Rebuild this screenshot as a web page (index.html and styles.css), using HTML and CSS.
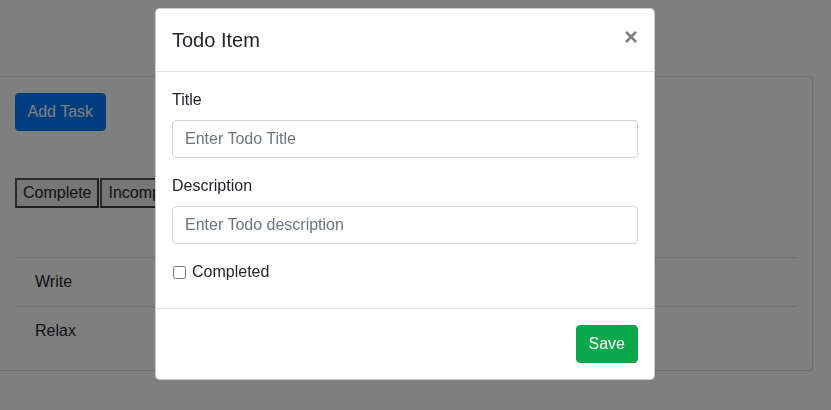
FILE: index.html
```html
<!DOCTYPE html>
<html lang="en">
<head>
<meta charset="utf-8">
<title>Todo</title>
<link rel="stylesheet" href="styles.css">
</head>
<body>
<main class="page">
  <section class="card">
    <div class="card-body">
      <button class="btn btn-primary" type="button">Add Task</button>
      <div class="filters">
        <button class="filter" type="button">Complete</button>
        <button class="filter" type="button">Incomplete</button>
      </div>
      <table class="todo-table">
        <tbody>
          <tr><td>Write</td></tr>
          <tr><td>Relax</td></tr>
        </tbody>
      </table>
    </div>
  </section>
</main>

<div class="backdrop"></div>

<div class="modal-dialog" role="dialog">
  <div class="modal-content">
    <div class="modal-header">
      <h5 class="modal-title">Todo Item</h5>
      <button class="close" type="button" aria-label="Close">×</button>
    </div>
    <div class="modal-body">
      <div class="form-group">
        <label class="field-label" for="title">Title</label>
        <input class="form-control" id="title" type="text" placeholder="Enter Todo Title">
      </div>
      <div class="form-group">
        <label class="field-label" for="desc">Description</label>
        <input class="form-control" id="desc" type="text" placeholder="Enter Todo description">
      </div>
      <div class="form-check">
        <input class="check" id="done" type="checkbox">
        <label for="done">Completed</label>
      </div>
    </div>
    <div class="modal-footer">
      <button class="btn btn-success" type="button">Save</button>
    </div>
  </div>
</div>
</body>
</html>
```

FILE: styles.css
```css
* { box-sizing: border-box; }

html, body {
  margin: 0;
  padding: 0;
  background: #fff;
  font-family: "Liberation Sans", Arial, sans-serif;
  font-size: 16px;
  line-height: 1.5;
  color: #212529;
}

.page {
  padding-top: 76px;
}

.card {
  width: 813px;
  height: 295px;
  border: 1px solid rgba(0, 0, 0, 0.125);
  border-left: none;
  border-radius: 0 4px 4px 0;
  background: #fff;
}

.card-body {
  padding: 16px 15px 15px 15px;
}

.btn {
  display: inline-block;
  font-family: inherit;
  font-size: 16px;
  line-height: 24px;
  padding: 6px 12px;
  border: 1px solid transparent;
  border-radius: 4px;
  color: #fff;
  cursor: pointer;
}

.btn-primary {
  padding: 6px 11.5px;
  background: #007bff;
  border-color: #007bff;
}

.btn-success {
  background: #0aa84a;
  border-color: #0aa84a;
}

.filters {
  display: flex;
  gap: 1px;
  margin-top: 47px;
}

.filter {
  height: 30px;
  padding: 0 6px;
  font-family: inherit;
  font-size: 16px;
  line-height: 26px;
  color: #222;
  background: #efefef;
  border: 2px solid #3a3a3a;
  border-top-color: #555;
  border-left-color: #555;
  border-radius: 0;
}

.todo-table {
  width: 100%;
  margin-top: 49px;
  border-collapse: collapse;
}

.todo-table td {
  padding: 12px 20px;
  border-top: 1px solid #dee2e6;
  line-height: 24px;
}

.backdrop {
  position: fixed;
  inset: 0;
  background: rgba(0, 0, 0, 0.5);
}

.modal-dialog {
  position: fixed;
  top: 8px;
  left: 155px;
  width: 500px;
}

.modal-content {
  background: #fff;
  border: 1px solid rgba(0, 0, 0, 0.2);
  border-radius: 4.8px;
}

.modal-header {
  display: flex;
  align-items: flex-start;
  padding: 16px;
  border-bottom: 1px solid #dee2e6;
}

.modal-title {
  margin: 0;
  font-size: 20px;
  font-weight: 500;
  line-height: 30px;
}

.close {
  margin: -16px -16px -16px auto;
  padding: 16px;
  background: transparent;
  border: 0;
  font-family: inherit;
  font-size: 24px;
  font-weight: 700;
  line-height: 1;
  color: #000;
  opacity: 0.5;
  text-shadow: 0 1px 0 #fff;
  cursor: pointer;
}

.modal-body {
  padding: 16px;
}

.form-group {
  margin-bottom: 16px;
}

.field-label {
  display: block;
  margin-bottom: 8px;
}

.form-control {
  display: block;
  width: 100%;
  height: 38px;
  padding: 6px 12px;
  font-family: inherit;
  font-size: 16px;
  line-height: 24px;
  color: #495057;
  background: #fff;
  border: 1px solid #ced4da;
  border-radius: 4px;
}

.form-control::placeholder {
  color: #6c757d;
  opacity: 1;
}

.form-check {
  display: flex;
  align-items: center;
  margin-bottom: 8px;
}

.check {
  width: 13px;
  height: 13px;
  margin: 0 6px 0 1px;
}

.modal-footer {
  display: flex;
  justify-content: flex-end;
  padding: 16px;
  border-top: 1px solid #dee2e6;
}
```
